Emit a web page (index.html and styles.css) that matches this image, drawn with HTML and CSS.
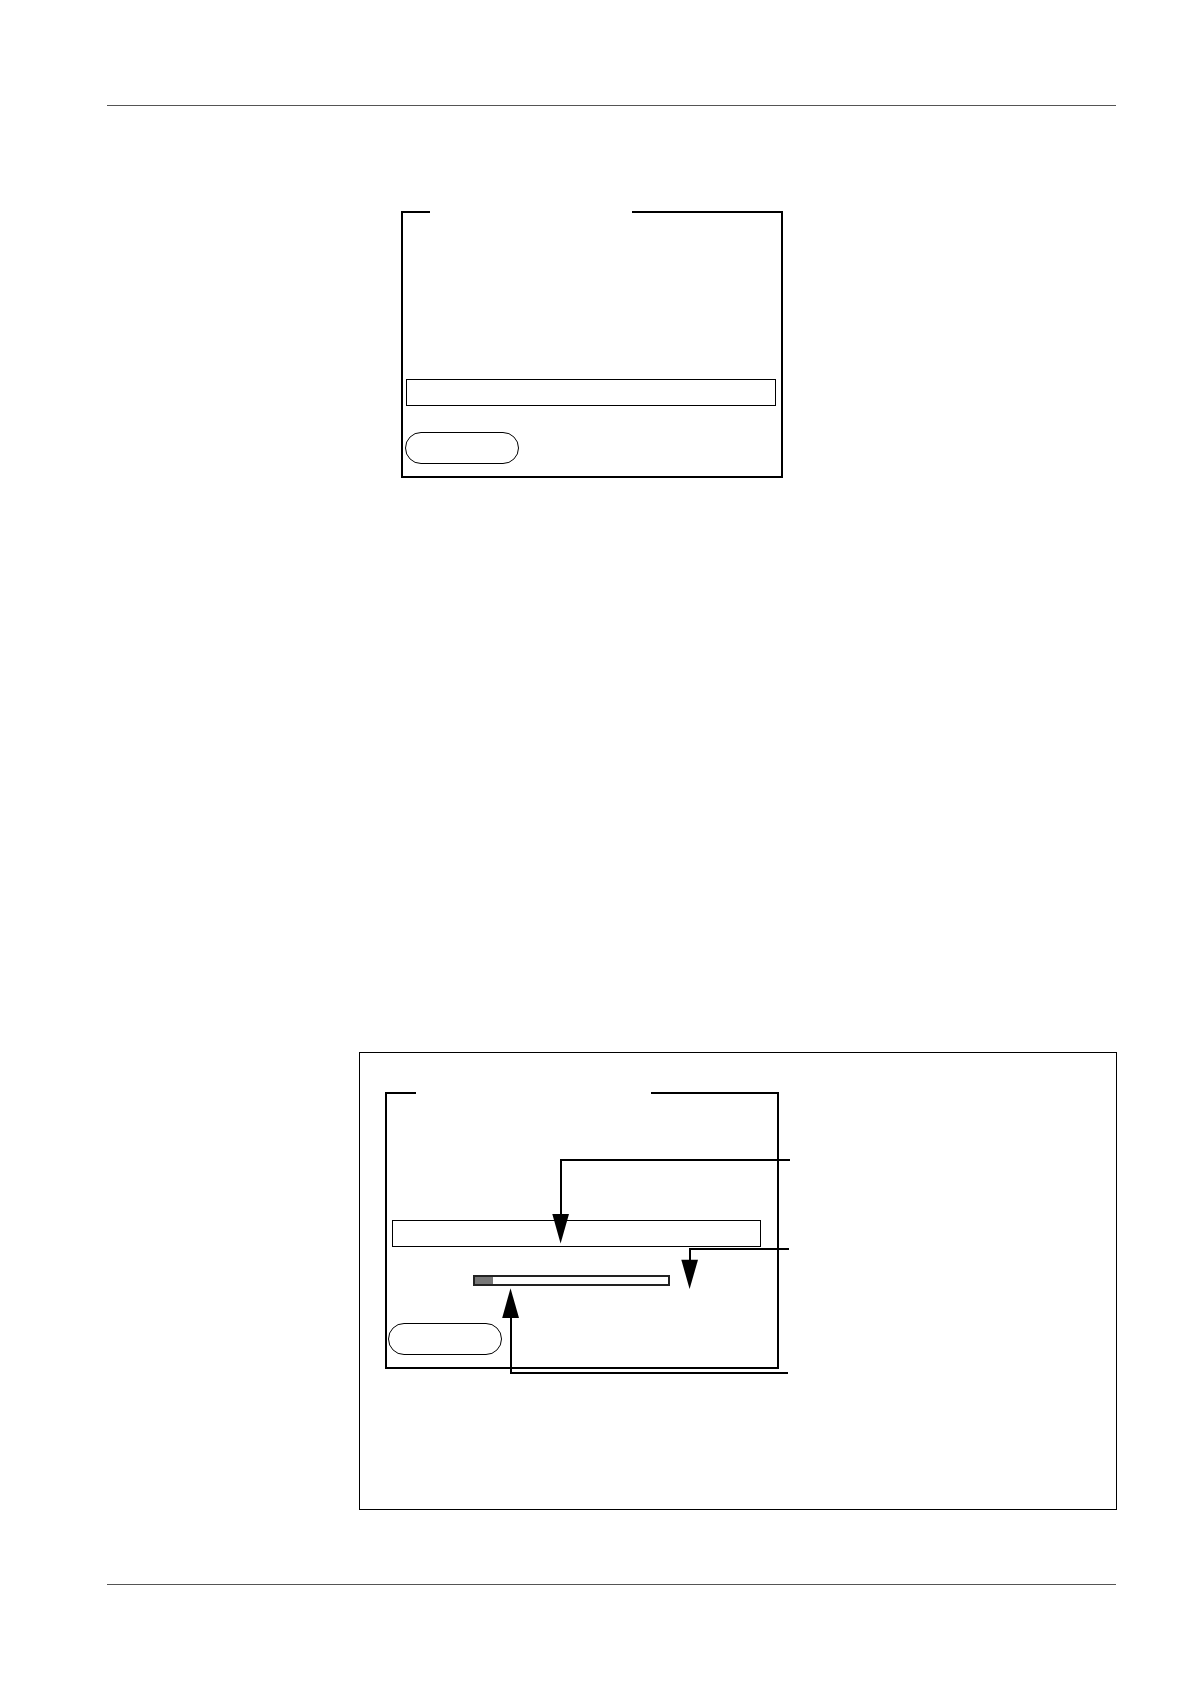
FILE: index.html
```
<!DOCTYPE html>
<html lang="en">
<head>
<meta charset="UTF-8">
<meta name="viewport" content="width=device-width,initial-scale=1.0">
<title>Display and progress</title>
<link rel="stylesheet" href="styles.css">
</head>
<body>
<div class="page">
	<header class="rule"></header>

	<main class="content">
		<section class="step">
			<fieldset class="panel panel-message">
				<legend></legend>
				<input class="line" type="text" aria-label="Message" readonly>
				<button class="key" type="button" aria-label="Cancel"></button>
			</fieldset>
		</section>

		<section class="frame">
			<div class="figure">
				<fieldset class="panel panel-progress">
					<legend></legend>
					<input class="line" type="text" aria-label="Current action" readonly>
					<progress class="bar" value="18" max="193" aria-label="Progress"></progress>
					<button class="key" type="button" aria-label="Cancel"></button>
				</fieldset>
				<!-- callout arrows, drawn over the panel -->
				<svg class="arrows" width="406" height="284" viewBox="0 0 406 284" aria-hidden="true">
					<g fill="none" stroke="#000" stroke-width="2">
						<path d="M405 68H176V124"/>
						<path d="M404 157H305V170"/>
						<path d="M403 281H126V225"/>
					</g>
					<path d="M167.3 122H184L175.6 151.5Z"/>
					<path d="M296.3 167.7H313L304.6 197Z"/>
					<path d="M117.2 226H134L125.5 196.3Z"/>
				</svg>
			</div>
		</section>
	</main>

	<footer class="rule"></footer>
</div>
</body>
</html>
```
FILE: styles.css
```
html,body { margin:0; padding:0; }
body { background:#fff; color:#000; font-family:"Liberation Sans",Arial,sans-serif; }
*,*:before,*:after { box-sizing:border-box; }

.page { padding:105px 74px 99px 107px; }
.rule { height:1px; background:#555; }

/* text column starts after the wide left margin */
.content { padding:105px 0 74px 252px; }
.step { padding-left:42px; margin-bottom:574px; }
.frame { margin-right:-1px; padding:39px 25px 140px; border:1px solid #000; }
.figure { position:relative; }

/* display panels, the legend leaves the gap in the top border */
.panel { display:block; margin:0; border:2px solid #000; }
.panel legend { height:2px; padding:0; }
.line { display:block; width:370px; height:27px; padding:0 4px; border:1px solid #000; border-radius:0; background:none; font:inherit; outline:none; }
.key { display:block; width:114px; height:32px; padding:0; border:1px solid #000; border-radius:16px; background:none; font:inherit; }

.panel-message { width:382px; padding:166px 2px 12px; }
.panel-message legend { width:202px; margin-left:25px; }
.panel-message .line { margin:0 0 26px 1px; }

.panel-progress { width:394px; padding:126px 1px 12px; }
.panel-progress legend { width:235px; margin-left:28px; }
.panel-progress .line { width:369px; margin:0 0 28px 4px; }

.bar { display:block; width:197px; height:11px; margin:0 0 37px 85px; border:2px solid #222; background:#fff; -webkit-appearance:none; appearance:none; }
.bar::-webkit-progress-bar { background:#fff; }
.bar::-webkit-progress-value { background:#777; }
.bar::-moz-progress-bar { background:#777; }

.arrows { position:absolute; left:0; top:0; }
```
